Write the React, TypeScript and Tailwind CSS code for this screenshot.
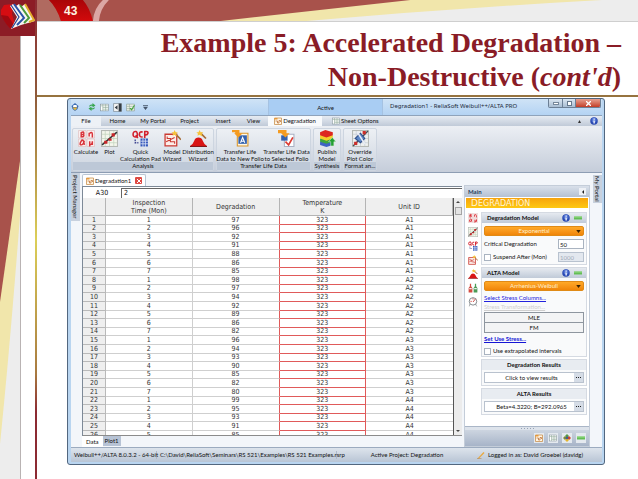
import { ReactNode } from 'react';
import clsx from 'clsx';

interface SheetRow {
  time: number;
  degradation: number;
  temperature: number;
  unit: string;
}

const readings = [
  [97, 96, 92, 91, 88, 86, 85],
  [98, 97, 94, 92, 89, 86, 82],
  [96, 94, 93, 90, 85, 82, 80],
  [99, 95, 93, 91, 85],
];

const rows: SheetRow[] = readings.flatMap((values, unit) =>
  values.map((degradation, i) => ({
    time: i + 1,
    degradation,
    temperature: 323,
    unit: `A${unit + 1}`,
  }))
);

function Logo() {
  return (
    <svg viewBox="0 0 35 36" className="block h-[36px] w-[35px] bg-[#8c1c26]">
      <path d="M1 10 L4 5 L13 4 L12 14 L16 28 L11 29 Q6 24 1 15Z" fill="#d60d12" />
      <path d="M1 15 Q6 25 11 29 L16 28 L8 16Z" fill="#a00910" />
      <path d="M10 6 L17 17 L11 29 L21 25 L35 21 L25 4 L21 7 L19 4 L16 6 L13 4Z" fill="#f8f6f2" />
      <path d="M11 5 L19 17 L12 28" fill="none" stroke="#27418f" strokeWidth="1.2" />
      <path d="M14 4 L24 18 L17 25" fill="none" stroke="#2b52a8" strokeWidth="2" />
      <path d="M20 5 L29 18 L24 23" fill="none" stroke="#4c9a3c" strokeWidth="2" />
      <path d="M25 4 L34 20 L29 22" fill="none" stroke="#e2ae2c" strokeWidth="2" />
    </svg>
  );
}

function TopArt() {
  return (
    <svg viewBox="0 0 602 21" preserveAspectRatio="none" className="block h-[21px] w-full">
      <defs>
        <linearGradient id="badge" x1="0" y1="0" x2="0" y2="1">
          <stop offset="0" stopColor="#a90508" />
          <stop offset="1" stopColor="#d20a0c" />
        </linearGradient>
      </defs>
      <rect width="602" height="21" fill="#ededed" />
      <path d="M0 0H566Q420 8 270 21H0Z" fill="#f1e6ab" />
      <path d="M0 0H374L184 21H0Z" fill="#a8524b" />
      <path d="M0 0H12Q20 8 24 21H0Z" fill="#b06a60" />
      <path d="M12 0H46Q53 8 56 21H24Q20 8 12 0Z" fill="url(#badge)" />
      <path d="M66 0H72Q63 9 62 21H56Q57 8 66 0Z" fill="#dba7a4" />
    </svg>
  );
}

function SideArt() {
  return (
    <svg viewBox="0 0 20 443" preserveAspectRatio="none" className="block w-[21px] flex-1 border-r border-[#b9b3b3]">
      <rect width="20" height="443" fill="#ededed" />
      <path d="M0 0H20V180Q10 310 0 408Z" fill="#f1e6ab" />
      <path d="M0 0H20V125L0 266Z" fill="#a8524b" />
    </svg>
  );
}

type IconName =
  | 'calculate'
  | 'plot'
  | 'qcp'
  | 'model'
  | 'distribution'
  | 'transfer'
  | 'transferCheck'
  | 'publish'
  | 'override'
  | 'folio'
  | 'grid'
  | 'refresh'
  | 'export'
  | 'check'
  | 'app'
  | 'bottles'
  | 'gauge'
  | 'diamonds'
  | 'minus'
  | 'help'
  | 'pencil';

const drawings: Record<IconName, ReactNode> = {
  calculate: (
    <g fill="none" stroke="#d8333a" strokeWidth="1.4">
      <path d="M.5.5H7.5V7.5H.5ZM8.5.5H15.5V7.5H8.5ZM.5 8.5H7.5V15.5H.5ZM8.5 8.5H15.5V15.5H8.5Z" fill="#fbf0f0" stroke="#dcb9b9" strokeWidth=".6" />
      <path d="M3 7V2.5Q5.500 1 5.500 3T3 4Q6 4 5.500 5.500T3 6M10.500 6V2.500M10.500 3.500Q13.500 1 13.500 4V7M6 10Q5 14 3 14T3 10.500T6 14M11 15.500V10.500M11 13.500Q13.500 14.500 13.500 10.500V14" />
    </g>
  ),
  plot: (
    <>
      <rect x=".5" y=".5" width="15" height="15" fill="#f4f6ec" stroke="#b5b9b4" />
      <path d="M4 1V15M8 1V15M12 1V15M1 4H15M1 8H15M1 12H15" stroke="#bfd3bb" strokeWidth=".7" />
      <path d="M1 14L15 2" stroke="#2f3436" strokeWidth="1.300" />
      <path d="M3 10h3v3H3zM7 8h3v2H7zM10 3h3v3h-3z" fill="#c9272b" />
    </>
  ),
  qcp: (
    <>
      <g fill="none" stroke="#d3212e" strokeWidth="1.500">
        <path d="M4 1.500Q1 1 1 4T4 6.500Q5.500 6 5 3.500T3.500 1.500M3.500 5L5.500 7.500M10 2Q7 1 7 4T10 6.500M12 7.500V1.500Q15.500 1 15 3T12 4.500" />
      </g>
      <path d="M3 9V12H6" stroke="#363d8c" strokeWidth="1.200" strokeDasharray="1.500 1" fill="none" />
      <path d="M8 8H15V15.500H8Z" fill="#3457bb" />
      <path d="M10.300 8V16M12.600 8V16M8 10.500H15M8 13H15" stroke="#dbe4f6" strokeWidth=".8" />
    </>
  ),
  model: (
    <>
      <path d="M1 4H12V15H1Z" fill="#fceeea" stroke="#ca3a32" strokeWidth="1.200" />
      <path d="M3 6V8H6V11H10V13M2 11L10 7" stroke="#ca3a32" fill="none" />
      <path d="M10 3L16 9" stroke="#a46a35" strokeWidth="1.500" />
      <path d="M10 0L11 2L13 2L11.500 3.500L12 6L10 4.500L8 5.500L8.500 3.500L7 2L9 2Z" fill="#f7c33b" />
    </>
  ),
  distribution: (
    <>
      <path d="M0 15Q3 13 4 10T8 7T12 10T16 15Z" fill="#d91515" />
      <path d="M0 15.500H16" stroke="#80191c" />
      <path d="M10 3L15 8" stroke="#a46a35" strokeWidth="1.600" />
      <path d="M9 0L10 2L12.500 2L11 3.500L11.500 6L9 4.500L7 5.500L7.500 3.500L6 2L8 2Z" fill="#f7c33b" />
    </>
  ),
  transfer: (
    <>
      <path d="M5 3H15V15H5Z" fill="#fff8e5" stroke="#d9962c" />
      <path d="M6 5H14V13H6Z" fill="#3361ae" />
      <path d="M8 12L10 7L12 12M9 10.500H11" stroke="#fff" fill="none" />
      <path d="M0 0H7V3H10L6 7L2 3H3V2H0Z" fill="#f49b21" />
    </>
  ),
  transferCheck: (
    <>
      <path d="M6 4H15V15.500H6Z" fill="#fff" stroke="#a9b1c3" />
      <path d="M3 5H9V10H3Z" fill="#3361ae" />
      <path d="M0 0H8V3H11L7 7L3 3H0Z" fill="#f49b21" />
      <path d="M7 11L10 14L14 7" stroke="#dc3b32" fill="none" strokeWidth="1.600" />
    </>
  ),
  publish: (
    <>
      <path d="M1 11L8 8L13 10V14L7 16L1 14Z" fill="#3d62c5" />
      <path d="M1 8L8 6L13 8V11L7 13L1 11Z" fill="#3da53c" />
      <path d="M1 5L8 4L13 5V8L7 10L1 8Z" fill="#f3cf2c" />
      <path d="M1 2L6 0L13 2V5L7 7L1 5Z" fill="#dd2820" />
      <path d="M12.500 7L16 11H14V15H11V11H9Z" fill="#239f32" stroke="#d8eed6" strokeWidth=".5" />
    </>
  ),
  override: (
    <>
      <rect x=".5" y=".5" width="15" height="15" fill="#eef1ef" stroke="#b5b9b4" />
      <path d="M4 1V15M8 1V15M12 1V15M1 4H15M1 8H15M1 12H15" stroke="#c3ccd5" strokeWidth=".7" />
      <path d="M1 15L15 1" stroke="#494d56" strokeWidth="1.300" />
      <path d="M3 8L8 3L12 8L8 12Z" fill="#5d88c8" stroke="#30508a" />
      <path d="M5 2L12 13" stroke="#e9edf7" strokeWidth="1.500" />
      <path d="M10 1h3v3h-3zM2 11h3v3H2z" fill="#cc2e2a" />
    </>
  ),
  folio: (
    <>
      <path d="M1 2H15V15H1Z" fill="#fff6e4" stroke="#c78b45" strokeWidth="1.500" />
      <path d="M1 2H7V5H1Z" fill="#e99a3b" />
      <path d="M3 8H7V12H10V7H13V10" fill="none" stroke="#bb6e34" strokeWidth="1.500" />
    </>
  ),
  grid: (
    <>
      <rect x="1" y="2" width="14" height="12" fill="#fff" stroke="#7e8d94" />
      <path d="M1 5H15M5 2V14M5 8H15M5 11H15M10 2V14" stroke="#88a593" fill="none" />
    </>
  ),
  refresh: (
    <path d="M2 7Q3 2 9 3V0L15 5L9 9V6Q5 5 4 7ZM14 9Q13 14 7 13V16L1 11L7 7V10Q11 11 12 9Z" fill="#3aa753" />
  ),
  export: (
    <>
      <path d="M1 1H15V15H1Z" fill="#f7f7f7" stroke="#66727c" />
      <path d="M10 1H15V15H10Z" fill="#353d45" />
      <path d="M8 4V12L3 8Z" fill="#353d45" />
    </>
  ),
  check: (
    <>
      <path d="M1 2H15V14H1Z" fill="#eef3e9" stroke="#83948b" />
      <path d="M1 6H15M1 10H15M6 2V14" stroke="#91a69a" />
      <path d="M7 9L10 12L15 4" stroke="#44a33e" strokeWidth="2" fill="none" />
    </>
  ),
  app: (
    <>
      <path d="M8 0L15 6L13 12L8 16L3 12L1 6Z" fill="#3c6db4" />
      <path d="M3 9H13L8 15Z" fill="#e6b83a" />
      <path d="M5 4H11L12 8H4Z" fill="#fff" />
    </>
  ),
  bottles: (
    <>
      <path d="M3 1H5V5L7 8V15H1V8L3 5Z" fill="#d44a40" />
      <path d="M11 1H13V5L15 8V15H9V8L11 5Z" fill="#4b9a55" />
      <path d="M2 8H6V10H2ZM10 8H14V10H10Z" fill="#eee" />
    </>
  ),
  gauge: (
    <>
      <circle cx="8" cy="7" r="6" fill="#fff" stroke="#7d8487" strokeWidth="1.500" />
      <path d="M8 8L12 3M4 7H6M8 2V4" stroke="#c63933" strokeWidth="1.400" />
      <path d="M3 11L2 15M12 11L14 15" stroke="#7d8487" />
    </>
  ),
  diamonds: (
    <>
      <path d="M8 0L12 4L8 8L4 4Z" fill="#549a48" />
      <path d="M4 4L8 8L4 12L0 8Z" fill="#7f8a3a" />
      <path d="M12 4L16 8L12 12L8 8Z" fill="#d1412d" />
      <path d="M8 8L12 12L8 16L4 12Z" fill="#e5b52c" />
      <path d="M8 5L11 8L8 11L5 8Z" fill="#30529d" />
    </>
  ),
  minus: (
    <>
      <path d="M0 5H16V11H0Z" fill="#63bd55" />
      <path d="M0 5H16V7H0Z" fill="#98dc89" />
    </>
  ),
  help: (
    <>
      <circle cx="8" cy="8" r="7.500" fill="#2949b3" />
      <circle cx="8" cy="6" r="5" fill="#5375d4" />
      <path d="M7 3H9.500V5.500H7ZM6.500 7H9.500V13H7V8.500H6.500Z" fill="#fff" />
    </>
  ),
  pencil: (
    <>
      <path d="M1 15L13 2L15 4L4 15Z" fill="#eaa83d" />
      <path d="M0 15H9" stroke="#aa7d43" />
    </>
  ),
};

function Icon({ name, className }: { name: IconName; className?: string }) {
  return (
    <svg viewBox="0 0 16 16" className={clsx('block shrink-0', className)} aria-hidden="true">
      {drawings[name]}
    </svg>
  );
}

function TitleBar() {
  return (
    <div className="flex h-[16px] bg-gradient-to-b from-[#cfe3f6] to-[#b4d3f3]">
      <div className="flex w-[197px] items-center gap-[4px]">
        <Icon name="app" className="mr-[5px] size-[8px]" />
        <Icon name="refresh" className="size-[8px]" />
        <Icon name="grid" className="size-[9px]" />
        <Icon name="export" className="size-[9px]" />
        <Icon name="check" className="size-[9px]" />
        <svg viewBox="0 0 6 6" className="ml-[4px] size-[5px]">
          <path d="M0 0H6V1H0ZM0 2H6L3 6Z" fill="#46566a" />
        </svg>
      </div>
      <div className="w-[115px] border-x border-[#a5c2e2] bg-[#a9cdf3] text-center leading-[17px]">Active</div>
      <h2 className="flex-1 whitespace-nowrap pl-[7px] font-['Noto_Sans',sans-serif] leading-[14px] text-[#1c2a3a]">
        Degradation1 - ReliaSoft Weibull++/ALTA PRO
      </h2>
      <div className="mr-px flex h-[9px] overflow-hidden rounded-b-[2px] border border-t-0 border-[#6c7f95]">
        <button aria-label="Minimize" className="flex w-[14px] items-center justify-center border-r border-[#6c7f95] bg-gradient-to-b from-[#dbe6f1] to-[#a9bdd2]">
          <span className="h-[3px] w-[6px] border border-[#76879a] bg-white" />
        </button>
        <button aria-label="Restore" className="flex w-[13px] items-center justify-center border-r border-[#6c7f95] bg-gradient-to-b from-[#dbe6f1] to-[#a9bdd2]">
          <span className="size-[5px] border border-[#66788c] bg-white" />
        </button>
        <button aria-label="Close" className="flex w-[24px] items-center justify-center bg-gradient-to-b from-[#e6a091] to-[#c23c25]">
          <svg viewBox="0 0 6 6" className="size-[5px]">
            <path d="M0 0L6 6M6 0L0 6" stroke="#fff" strokeWidth="1.600" />
          </svg>
        </button>
      </div>
    </div>
  );
}

const menu = [
  { label: 'File', width: 'w-[30px]' },
  { label: 'Home', width: 'w-[33px]' },
  { label: 'My Portal', width: 'w-[38px]' },
  { label: 'Project', width: 'w-[35px]' },
  { label: 'Insert', width: 'w-[32px]' },
  { label: 'View', width: 'w-[29px]' },
];

function RibbonTabs() {
  return (
    <nav className="flex h-[11px] border-t border-[#8fa3bb] bg-gradient-to-b from-[#e6ebf2] to-[#c0cad8]">
      {menu.map(({ label, width }) => (
        <button
          key={label}
          className={clsx('text-center leading-[10px]', width, label === 'File' && 'bg-[#edf1f6]')}
        >
          {label}
        </button>
      ))}
      <button className="flex w-[54px] items-center justify-center gap-[1px] whitespace-nowrap bg-[#f8fafc]">
        <Icon name="folio" className="size-[8px]" />
        Degradation
      </button>
      <button className="ml-[10px] flex items-center gap-[1px] whitespace-nowrap">
        <Icon name="grid" className="size-[8px]" />
        Sheet Options
      </button>
      <div className="ml-auto flex items-center gap-[9px] pr-[4px]">
        <svg viewBox="0 0 4 4" className="size-[3px]">
          <path d="M0 4L2 0L4 4Z" fill="#333" />
        </svg>
        <Icon name="help" className="size-[8px]" />
      </div>
    </nav>
  );
}

interface Tool {
  icon: IconName;
  lines: string[];
  width: string;
}

const groups: { caption: string; tools: Tool[] }[] = [
  {
    caption: 'Analysis',
    tools: [
      { icon: 'calculate', lines: ['Calculate'], width: 'w-[26px]' },
      { icon: 'plot', lines: ['Plot'], width: 'w-[21px]' },
      { icon: 'qcp', lines: ['Quick', 'Calculation Pad'], width: 'w-[41px]' },
      { icon: 'model', lines: ['Model', 'Wizard'], width: 'w-[22px]' },
      { icon: 'distribution', lines: ['Distribution', 'Wizard'], width: 'w-[30px]' },
    ],
  },
  {
    caption: 'Transfer Life Data',
    tools: [
      { icon: 'transfer', lines: ['Transfer Life', 'Data to New Folio'], width: 'w-[46px]' },
      { icon: 'transferCheck', lines: ['Transfer Life Data', 'to Selected Folio'], width: 'w-[47px]' },
    ],
  },
  {
    caption: 'Synthesis',
    tools: [{ icon: 'publish', lines: ['Publish', 'Model'], width: 'w-[26px]' }],
  },
  {
    caption: 'Format an...',
    tools: [{ icon: 'override', lines: ['Override', 'Plot Color'], width: 'w-[32px]' }],
  },
];

function Ribbon() {
  return (
    <div className="flex h-[47px] gap-[2px] border-b border-[#8d9db3] bg-gradient-to-b from-[#eceff4] to-[#c5cdda] pb-px pl-px pt-[2px]">
      {groups.map(({ caption, tools }) => (
        <section key={caption} className="flex flex-col rounded-[2px] border border-[#cdd5e0] bg-gradient-to-b from-[#edf0f4] to-[#cdd5e0]">
          <div className="flex flex-1">
            {tools.map(({ icon, lines, width }) => (
              <button key={icon} className={clsx('flex flex-col items-center whitespace-nowrap pt-px leading-[7px]', width)}>
                <Icon name={icon} className="mb-px size-[17px]" />
                {lines.map((line) => (
                  <span key={line}>{line}</span>
                ))}
              </button>
            ))}
          </div>
          <h3 className="bg-[#bdc8d7] text-center leading-[8px]">{caption}</h3>
        </section>
      ))}
    </div>
  );
}

const headers = [['Inspection', 'Time (Mon)'], ['Degradation'], ['Temperature', 'K'], ['Unit ID']];

function Sheet() {
  return (
    <div className="flex h-[238px] overflow-hidden border-b border-[#8b8b8b]">
      <div className="min-w-0 flex-1 overflow-hidden border-r border-[#555]">
        <table className="w-full table-fixed border-separate border-spacing-0 text-center text-[7px] leading-[7px] text-[#333]">
          <thead>
            <tr className="h-[18px] bg-[#efefef]">
              <th className="w-[23px] border-b border-r border-[#b4b4b4] p-0" />
              {headers.map((lines) => (
                <th key={lines[0]} className="border-b border-r border-[#b4b4b4] p-0 font-normal leading-[8px]">
                  {lines.map((line) => (
                    <div key={line}>{line}</div>
                  ))}
                </th>
              ))}
            </tr>
          </thead>
          <tbody>
            {rows.map((row, i) => (
              <tr key={i} className="h-[9px] bg-white [&:nth-child(5n+2)]:h-[8px] [&:nth-child(5n+4)]:h-[8px]">
                <th className="border-b border-r border-[#b9b9b9] bg-[#efefef] p-0 font-normal">{i + 1}</th>
                <td className="border-b border-r border-[#cfcfcf] p-0">{row.time}</td>
                <td className="border-b border-r border-b-[#cfcfcf] border-r-[#e05a5a] p-0">{row.degradation}</td>
                <td className="border-b border-r border-[#e05a5a] p-0">{row.temperature}</td>
                <td className="border-b border-[#cfcfcf] p-0">{row.unit}</td>
              </tr>
            ))}
          </tbody>
        </table>
      </div>
      <div className="flex w-[8px] flex-col items-center justify-between bg-[#ececec] py-[2px]">
        <div className="flex flex-col items-center gap-[3px]">
          <svg viewBox="0 0 4 4" className="size-[4px]">
            <path d="M0 3L2 1L4 3Z" fill="#444" />
          </svg>
          <span className="h-[8px] w-[7px] border border-[#a5a5a5] bg-[#e4e4e4]" />
        </div>
        <svg viewBox="0 0 4 4" className="size-[4px]">
          <path d="M0 1L2 3L4 1Z" fill="#444" />
        </svg>
      </div>
    </div>
  );
}

function Workbook() {
  return (
    <div className="flex min-w-0 flex-1 flex-col">
      <div className="flex h-[13px] items-end">
        <div className="flex h-[12px] items-center gap-[1px] rounded-t-[2px] border border-b-0 border-[#b9c5d3] bg-white px-[3px]">
          <Icon name="folio" className="size-[8px]" />
          <span>Degradation1</span>
          <button aria-label="Close folio" className="ml-[3px] flex size-[7px] items-center justify-center rounded-[1px] bg-[#dd4a44]">
            <svg viewBox="0 0 4 4" className="size-[4px]">
              <path d="M0 0L4 4M4 0L0 4" stroke="#fff" />
            </svg>
          </button>
        </div>
      </div>
      <div className="border border-b-0 border-r-0 border-[#7d8997] bg-white font-['DejaVu_Sans_Condensed','DejaVu_Sans',sans-serif]">
        <div className="flex h-[11px] items-center text-[7px]">
          <label htmlFor="cell" className="w-[38px] text-center">A30</label>
          <input
            id="cell"
            defaultValue="2"
            className="h-[10px] min-w-0 flex-1 border-l border-t border-[#666] bg-white pl-[2px] outline-none"
          />
        </div>
        <Sheet />
      </div>
      <div className="flex h-[11px] items-start">
        <button className="h-[11px] bg-white px-[4px]">Data</button>
        <button className="h-[10px] bg-[#b7c3d5] px-[2px]">Plot1</button>
      </div>
    </div>
  );
}

const card = 'border border-[#d5dae2] bg-[#f9fafb] px-[2px]';

function CardHeader({ title }: { title: string }) {
  return (
    <h3 className="-mx-[2px] flex h-[10px] items-center bg-gradient-to-b from-[#e6eaf0] to-[#c0cad8] pl-[5px] pr-[4px] font-bold text-[#111]">
      <span className="flex-1 whitespace-nowrap">{title}</span>
      <Icon name="help" className="mr-[4px] size-[8px]" />
      <Icon name="minus" className="size-[8px]" />
    </h3>
  );
}

function ModelSelect({ label, value }: { label: string; value: string }) {
  return (
    <div className="relative mt-[3px]">
      <select
        aria-label={label}
        defaultValue={value}
        className="block h-[10px] w-full appearance-none rounded-[2px] border border-[#e08a16] bg-gradient-to-b from-[#ffa928] to-[#f08507] text-center leading-[8px] text-[#fff0d0] [text-align-last:center]"
      >
        <option>{value}</option>
      </select>
      <svg viewBox="0 0 6 4" className="pointer-events-none absolute right-[3px] top-[4px] h-[3px] w-[5px]">
        <path d="M0 0H6L3 4Z" fill="#3b2200" />
      </svg>
    </div>
  );
}

function Result({ title, value }: { title: string; value: string }) {
  return (
    <section className={clsx(card, 'mt-[2px] pb-[2px]')}>
      <h3 className="-mx-[2px] h-[10px] bg-[#e8ecf1] text-center font-bold leading-[10px] text-[#111]">{title}</h3>
      <div className="mt-[2px] flex h-[11px] border border-[#b9c2ce] bg-white">
        <input
          aria-label={title}
          readOnly
          defaultValue={value}
          className="min-w-0 flex-1 pl-[4px] text-center leading-[9px] outline-none"
        />
        <button aria-label={`Open ${title}`} className="flex w-[9px] items-center justify-center gap-px bg-[#d5dce6]">
          <span className="size-[1px] bg-[#222]" />
          <span className="size-[1px] bg-[#222]" />
          <span className="size-[1px] bg-[#222]" />
        </button>
      </div>
    </section>
  );
}

const sideTools: IconName[] = ['calculate', 'plot', 'qcp', 'model', 'distribution', 'bottles', 'gauge'];
const footTools: IconName[] = ['folio', 'grid', 'diamonds', 'minus'];

function ControlPanel() {
  return (
    <aside className="mt-[12px] flex w-[126px] shrink-0 flex-col border border-[#c4cdd9] bg-white">
      <h2 className="flex h-[11px] items-center justify-between bg-gradient-to-b from-[#d9e0ea] to-[#b5c1d2] pl-[3px] pr-[3px] font-bold text-[#27405f]">
        Main
        <button aria-label="Collapse panel" className="flex size-[7px] items-center justify-center bg-[#eef1f6]">
          <svg viewBox="0 0 4 4" className="size-[4px]">
            <path d="M3 0V4L1 2Z" fill="#222" />
          </svg>
        </button>
      </h2>
      <div className="mx-px mt-px h-[10px] bg-gradient-to-b from-[#f7a30c] to-[#fdc813] pl-[5px] font-['DejaVu_Sans',sans-serif] text-[9px] leading-[11px] text-[#fff6d8]">
        D<span className="text-[8px]">EGRADATION</span>
      </div>
      <div className="flex flex-1">
        <div className="flex w-[16px] flex-col items-center gap-[4px] pt-[5px]">
          {sideTools.map((name) => (
            <button key={name} aria-label={name}>
              <Icon name={name} className="size-[10px]" />
            </button>
          ))}
        </div>
        <div className="min-w-0 flex-1 pr-[2px] pt-[4px]">
          <section className={clsx(card, 'h-[53px]')}>
            <CardHeader title="Degradation Model" />
            <ModelSelect label="Degradation model" value="Exponential" />
            <div className="mt-[3px] flex h-[10px] items-center justify-between">
              <label htmlFor="critical" className="whitespace-nowrap">Critical Degradation</label>
              <input id="critical" defaultValue="50" className="h-[10px] w-[26px] border border-[#a9b3c0] bg-white pl-px outline-none" />
            </div>
            <div className="mt-[3px] flex h-[10px] items-center justify-between">
              <label className="flex items-center gap-[2px] whitespace-nowrap">
                <input type="checkbox" className="size-[7px] appearance-none border border-[#a9b3c0] bg-white" />
                Suspend After (Mon)
              </label>
              <input
                aria-label="Suspend after"
                disabled
                defaultValue="1000"
                className="h-[10px] w-[26px] border border-[#b8c2cf] bg-[#e3e8ef] pl-px text-[#a2abb8]"
              />
            </div>
          </section>
          <section className={clsx(card, 'mt-[2px] h-[90px]')}>
            <CardHeader title="ALTA Model" />
            <ModelSelect label="ALTA model" value="Arrhenius-Weibull" />
            <a href="#" className="mt-[2px] block leading-[9px] text-[#2222dd] underline">Select Stress Columns...</a>
            <a href="#" className="block leading-[10px] text-[#cfcfcf] underline">Stress Transformation...</a>
            <div className="border border-[#8e969f] bg-[#f3f4f5] text-center leading-[9px]">
              <div className="border-b border-[#8e969f]">MLE</div>
              <div>FM</div>
            </div>
            <a href="#" className="mt-px block font-bold leading-[10px] text-[#1515d5] underline">Set Use Stress...</a>
            <label className="mt-[2px] flex items-center gap-[2px] whitespace-nowrap leading-[10px]">
              <input type="checkbox" className="size-[7px] appearance-none border border-[#a9b3c0] bg-white" />
              Use extrapolated intervals
            </label>
          </section>
          <Result title="Degradation Results" value="Click to view results" />
          <Result title="ALTA Results" value="Beta=4.3220; B=292.0965" />
        </div>
      </div>
      <div className="mt-[9px] flex h-[4px] items-center justify-center gap-[2px] border-t border-[#aab6c7] bg-[#dde3eb]">
        {[0, 1, 2, 3, 4].map((dot) => (
          <span key={dot} className="size-[1px] bg-[#97a3b5]" />
        ))}
      </div>
      <div className="flex h-[16px] items-center justify-end gap-[4px] bg-gradient-to-b from-[#cdd5e0] to-[#a7b4c8] pr-[3px]">
        {footTools.map((name) => (
          <button key={name} aria-label={name} className="bg-[#e4e9ef] p-px">
            <Icon name={name} className="size-[8px]" />
          </button>
        ))}
      </div>
    </aside>
  );
}

function StatusBar() {
  return (
    <footer className="flex h-[15px] items-center whitespace-nowrap border-t border-[#9cabbf] bg-gradient-to-b from-[#dde4ec] to-[#b9c5d5]">
      <span className="w-[86px] border-r border-[#aebaca] pl-[3px]">Weibull++/ALTA 8.0.3.2 - 64-bit</span>
      <span className="w-[180px] border-r border-[#aebaca] pl-[3px]">C:\David\ReliaSoft\Seminars\RS 521\Examples\RS 521 Examples.rsrp</span>
      <span className="flex-1 text-center">Active Project: Degradation</span>
      <span className="flex items-center gap-[3px] pr-[19px]">
        <Icon name="pencil" className="size-[8px]" />
        Logged in as: David Groebel (davidg)
      </span>
    </footer>
  );
}

function AppWindow() {
  return (
    <div className="rounded-[3px] border border-[#52677f] bg-[#b9d5f0] pb-[2px] pl-[3px] pr-[2px] font-['Lato',sans-serif] text-[6px] leading-[8px] text-[#111]">
      <TitleBar />
      <RibbonTabs />
      <Ribbon />
      <div className="flex bg-[#f3f6fa]">
        <div className="w-[11px] shrink-0">
          <button className="h-[48px] w-[9px] whitespace-nowrap bg-[#c8d1de] text-center leading-[9px] [writing-mode:vertical-rl]">
            Project Manager
          </button>
        </div>
        <Workbook />
        <div className="w-[2px]" />
        <ControlPanel />
        <div className="flex w-[12px] shrink-0 justify-end pt-[2px]">
          <button className="h-[28px] w-[9px] whitespace-nowrap bg-[#c8d1de] text-center leading-[9px] [writing-mode:vertical-rl]">
            My Portal
          </button>
        </div>
      </div>
      <StatusBar />
    </div>
  );
}

export default function App() {
  return (
    <div className="flex min-h-screen bg-white">
      <div className="flex w-[35px] shrink-0 flex-col">
        <Logo />
        <SideArt />
      </div>
      <div className="w-[2px] shrink-0 bg-[linear-gradient(#8c2a33,#8f5a3a_20%,#dccf58_50%,#a87a40_78%,#8c2a33_86%)]" />
      <div className="min-w-0 flex-1">
        <div className="relative border-b border-[#cfcfcf]">
          <TopArt />
          <span className="absolute left-[27px] top-[4px] font-['Liberation_Sans',sans-serif] text-[12px] font-bold leading-[14px] text-[#fff3e0]">
            43
          </span>
        </div>
        <h1 className="h-[73px] pr-[17px] pt-[4px] text-right font-['Liberation_Serif',serif] text-[28px] font-bold leading-[34px] text-[#8a1c26]">
          Example 5: Accelerated Degradation –<br />
          Non-Destructive (<em>cont'd</em>)
        </h1>
        <div className="mb-px h-[2px] bg-[#96733f]" />
        <main className="pl-[30px] pr-[33px]">
          <AppWindow />
        </main>
      </div>
    </div>
  );
}
